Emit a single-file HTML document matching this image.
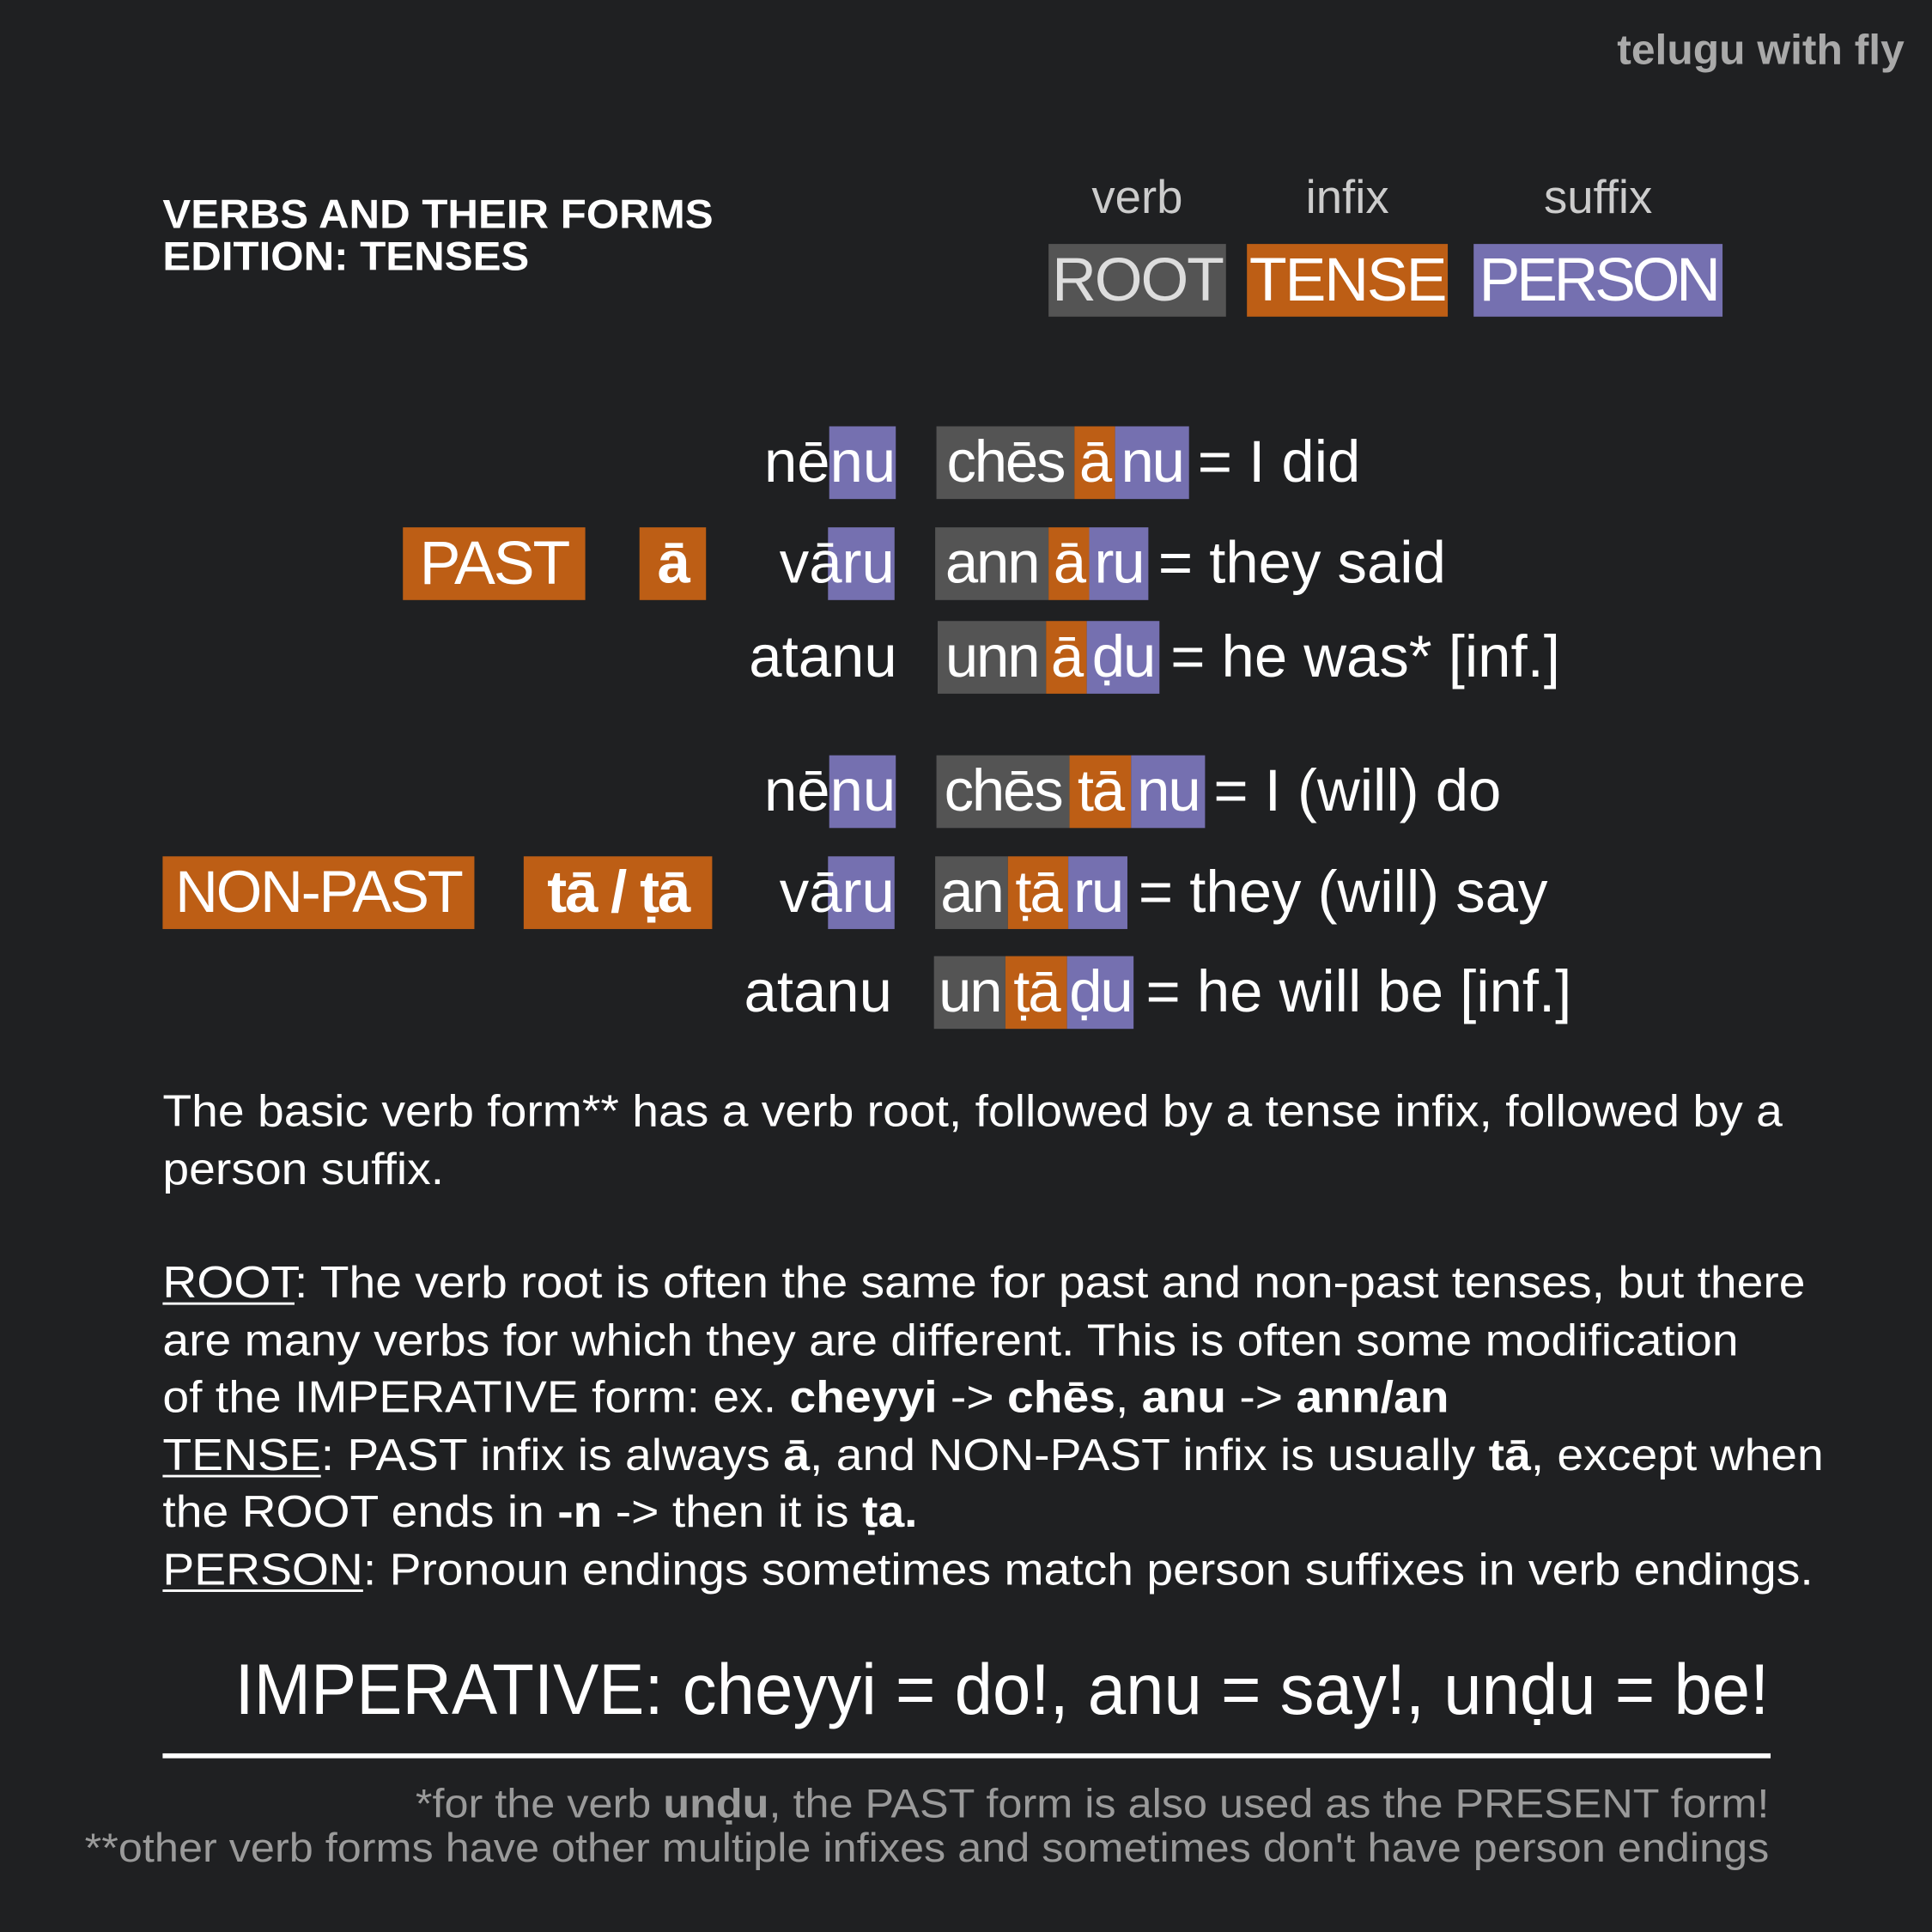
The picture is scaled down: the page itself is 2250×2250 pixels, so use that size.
<!DOCTYPE html>
<html><head><meta charset="utf-8"><style>
html,body{margin:0;padding:0;background:#1f2022;}
body{width:2250px;height:2249px;overflow:hidden;}
#w{position:absolute;left:0;top:0;width:1568px;height:1568px;transform:scale(1.43495);transform-origin:0 0;font-family:"Liberation Sans",sans-serif;color:#fff;}
.a{position:absolute;white-space:nowrap;}
.g{background:#545454}.o{background:#bd5e15}.p{background:#7570b0}
.box{position:absolute;height:59px;}
.seg{position:absolute;top:0;height:59px;line-height:59px;font-size:48px;text-align:center;overflow:visible;white-space:nowrap;letter-spacing:-1.5px;}
.lbl{font-size:48px;line-height:59px;}
.para{position:absolute;left:132px;font-size:36px;white-space:nowrap;transform:scaleX(1.07);transform-origin:0 0;line-height:46.5px;}
u{text-decoration-thickness:2px;text-underline-offset:4px;}
</style></head><body><div id="w">
<div class="a" style="right:22px;top:22px;font-size:34px;color:#a9a9a9;font-weight:bold;transform:scaleX(1.02);transform-origin:100% 0">telugu with fly</div>
<div class="a" style="left:132px;top:157px;font-size:33px;font-weight:bold;line-height:34px;transform:scaleX(1.04);transform-origin:0 0">VERBS AND THEIR FORMS<br>EDITION: TENSES</div>

<div class="a" style="left:851px;width:144px;top:140px;font-size:38px;color:#ccc;text-align:center">verb</div>
<div class="a" style="left:1012px;width:163px;top:140px;font-size:38px;color:#ccc;text-align:center">infix</div>
<div class="a" style="left:1196px;width:202px;top:140px;font-size:38px;color:#ccc;text-align:center">suffix</div>
<div class="box g" style="left:851px;top:198px;width:144px"><div class="seg" style="left:0;width:144px;font-size:50px;color:#ddd">ROOT</div></div>
<div class="box o" style="left:1012px;top:198px;width:163px"><div class="seg" style="left:0;width:163px;font-size:50px">TENSE</div></div>
<div class="box p" style="left:1196px;top:198px;width:202px"><div class="seg" style="left:0;width:202px;font-size:50px;letter-spacing:-3px">PERSON</div></div>

<div class="box o" style="left:327px;top:428px;width:148px"><div class="seg" style="left:0;width:148px;font-size:50px">PAST</div></div>
<div class="box o" style="left:519px;top:428px;width:54px"><div class="seg" style="left:0;width:54px;font-weight:bold">ā</div></div>
<div class="box o" style="left:132px;top:695px;width:253px"><div class="seg" style="left:0;width:253px;font-size:48px">NON-PAST</div></div>
<div class="box o" style="left:425px;top:695px;width:153px"><div class="seg" style="left:0;width:153px;font-weight:bold">tā / ṭā</div></div>

<div class="box p" style="left:673px;top:346px;width:54px"></div>
<div class="a lbl" style="right:841px;top:346px">nēnu</div>
<div class="box p" style="left:672px;top:428px;width:54px"></div>
<div class="a lbl" style="right:842px;top:428px">vāru</div>
<div class="a lbl" style="right:840px;top:504px">atanu</div>
<div class="box p" style="left:673px;top:613px;width:54px"></div>
<div class="a lbl" style="right:841px;top:613px">nēnu</div>
<div class="box p" style="left:672px;top:695px;width:54px"></div>
<div class="a lbl" style="right:842px;top:695px">vāru</div>
<div class="a lbl" style="right:844px;top:776px">atanu</div>

<div class="box" style="left:760px;top:346px;width:205px">
<div class="seg g" style="left:0;width:112px">chēs</div><div class="seg o" style="left:112px;width:33px">ā</div><div class="seg p" style="left:145px;width:60px">nu</div></div>
<div class="a lbl" style="left:972px;top:346px">= I did</div>

<div class="box" style="left:759px;top:428px;width:173px">
<div class="seg g" style="left:0;width:92px">ann</div><div class="seg o" style="left:92px;width:33px">ā</div><div class="seg p" style="left:125px;width:48px">ru</div></div>
<div class="a lbl" style="left:940px;top:428px">= they said</div>

<div class="box" style="left:761px;top:504px;width:180px">
<div class="seg g" style="left:0;width:88px">unn</div><div class="seg o" style="left:88px;width:33px">ā</div><div class="seg p" style="left:121px;width:59px">ḍu</div></div>
<div class="a lbl" style="left:950px;top:504px">= he was* [inf.]</div>

<div class="box" style="left:760px;top:613px;width:218px">
<div class="seg g" style="left:0;width:108px">chēs</div><div class="seg o" style="left:108px;width:50px">tā</div><div class="seg p" style="left:158px;width:60px">nu</div></div>
<div class="a lbl" style="left:985px;top:613px">= I (will) do</div>

<div class="box" style="left:759px;top:695px;width:156px">
<div class="seg g" style="left:0;width:59px">an</div><div class="seg o" style="left:59px;width:49px">ṭā</div><div class="seg p" style="left:108px;width:48px">ru</div></div>
<div class="a lbl" style="left:924px;top:695px">= they (will) say</div>

<div class="box" style="left:758px;top:776px;width:162px">
<div class="seg g" style="left:0;width:58px">un</div><div class="seg o" style="left:58px;width:50px">ṭā</div><div class="seg p" style="left:108px;width:54px">ḍu</div></div>
<div class="a lbl" style="left:930px;top:776px">= he will be [inf.]</div>

<div class="para" style="top:879px">The basic verb form** has a verb root, followed by a tense infix, followed by a<br>person suffix.</div>
<div class="para" style="top:1018px"><u>ROOT</u>: The verb root is often the same for past and non-past tenses, but there<br>are many verbs for which they are different. This is often some modification<br>of the IMPERATIVE form: ex. <b>cheyyi</b> -&gt; <b>chēs</b>, <b>anu</b> -&gt; <b>ann/an</b><br><u>TENSE</u>: PAST infix is always <b>ā</b>, and NON-PAST infix is usually <b>tā</b>, except when<br>the ROOT ends in <b>-n</b> -&gt; then it is <b>ṭa.</b><br><u>PERSON</u>: Pronoun endings sometimes match person suffixes in verb endings.</div>

<div class="a" style="right:132px;top:1338px;font-size:58px;transform:scaleX(0.958);transform-origin:100% 0">IMPERATIVE: cheyyi = do!, anu = say!, unḍu = be!</div>
<div class="a" style="left:132px;top:1423px;width:1305px;height:4px;background:#fff"></div>
<div class="a" style="right:132px;top:1446px;font-size:33px;color:#9a9a9a;text-align:right;line-height:36px;transform:scaleX(1.064);transform-origin:100% 0">*for the verb <b>unḍu</b>, the PAST form is also used as the PRESENT form!<br>**other verb forms have other multiple infixes and sometimes don't have person endings</div>
</div></body></html>
